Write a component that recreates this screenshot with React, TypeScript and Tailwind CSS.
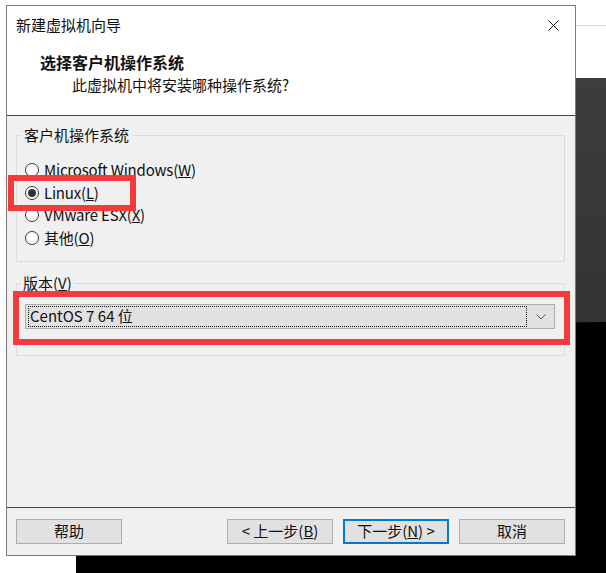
import React from 'react';

const font = 'font-["Noto_Sans_CJK_SC","Noto_Sans",sans-serif]';

const Radio: React.FC<{ checked?: boolean; children: React.ReactNode }> = ({ checked, children }) => (
  <div className="flex h-[22.5px] items-center">
    <span className="flex h-[14px] w-[14px] items-center justify-center rounded-full border border-[#333] bg-white">
      {checked && <span className="h-[8px] w-[8px] rounded-full bg-[#333]" />}
    </span>
    <span className="ml-[5px] text-[15px] leading-[20px] tracking-[-0.2px] text-[#111]">{children}</span>
  </div>
);

const Btn: React.FC<{ primary?: boolean; children: React.ReactNode }> = ({ primary, children }) => (
  <button
    className={
      primary
        ? 'flex h-[25px] w-[106px] items-center justify-center border-2 border-[#0078d7] bg-[#e1e1e1] text-[15px] text-[#111]'
        : 'flex h-[25px] w-[106px] items-center justify-center border border-[#adadad] bg-[#e1e1e1] text-[15px] text-[#111]'
    }
  >
    {children}
  </button>
);

export default function App() {
  return (
    <div className={`relative h-[573px] w-[606px] overflow-hidden bg-white ${font}`}>
      {/* background window behind the dialog */}
      <div className="absolute left-[575px] right-0 top-[25px] h-px bg-[#dcdcdc]" />
      <div className="absolute bottom-0 left-[76px] right-0 top-[78px] bg-gradient-to-b from-[#3d3d3d] to-[#2a2a2a]" />
      <div className="absolute bottom-0 left-[76px] right-0 top-[322px] bg-black [clip-path:polygon(0_6px,100%_0,100%_100%,0_100%)]" />

      {/* dialog */}
      <div className="absolute left-[6px] top-[5px] flex h-[551px] w-[570px] flex-col border border-[#7a7a7a] bg-[#f0f0f0]">
        <div className="h-[110px] border-b border-[#4a4a4a] bg-white">
          <div className="flex h-[38px] items-center justify-between pl-[9px] pr-[16px]">
            <span className="text-[15px] text-[#111]">新建虚拟机向导</span>
            <svg width="11" height="11" viewBox="0 0 11 11">
              <path d="M0.5 0.5L10.5 10.5M10.5 0.5L0.5 10.5" stroke="#111" strokeWidth="1" />
            </svg>
          </div>
          <div className="mt-[8px] pl-[33px] text-[16px] font-bold leading-[20px] text-[#111]">选择客户机操作系统</div>
          <div className="mt-[3px] pl-[65px] text-[15px] leading-[20px] text-[#111]">此虚拟机中将安装哪种操作系统?</div>
        </div>

        <div className="flex-1 pl-[9px] pr-[10px] pt-[9px]">
          <fieldset className="border border-[#dcdcdc] px-0 pb-[12px] pt-[14px]">
            <legend className="ml-[5px] px-[2px] text-[15px] leading-[20px] text-[#111]">客户机操作系统</legend>
            <div className="pl-[8px]">
              <Radio>Microsoft Windows(<u>W</u>)</Radio>
              <Radio checked>Linux(<u>L</u>)</Radio>
              <Radio>VMware ESX(<u>X</u>)</Radio>
              <Radio>其他(<u>O</u>)</Radio>
            </div>
          </fieldset>

          <fieldset className="mt-[11px] border border-[#dcdcdc] px-0 pb-[26px] pt-[11px]">
            <legend className="ml-[4px] px-[2px] text-[15px] leading-[20px] text-[#111]">
              版本(<u>V</u>)
            </legend>
            <div className="pl-[8px] pr-[9px]">
              <div className="flex h-[25px] items-center border border-[#adadad] bg-[#e1e1e1] pl-[2px] pr-[8px]">
                <div className="flex h-[21px] flex-1 items-center border border-dotted border-[#111] pl-[1px] text-[15px] text-[#111]">
                  CentOS 7 64 位
                </div>
                <svg className="ml-[9px]" width="10" height="6" viewBox="0 0 10 6">
                  <path d="M0.5 0.5L5 5L9.5 0.5" fill="none" stroke="#555" strokeWidth="1" />
                </svg>
              </div>
            </div>
          </fieldset>
        </div>

        <div className="flex h-[48px] items-start border-t border-[#4a4a4a] pl-[9px] pr-[10px] pt-[11px]">
          <Btn>帮助</Btn>
          <div className="ml-auto flex gap-[10px]">
            <Btn>&lt; 上一步(<u>B</u>)</Btn>
            <Btn primary>下一步(<u>N</u>) &gt;</Btn>
            <Btn>取消</Btn>
          </div>
        </div>
      </div>

      {/* red annotation boxes */}
      <div className="absolute left-[8px] top-[175px] h-[36px] w-[128px] border-[6px] border-[#f33b3b]" />
      <div className="absolute left-[13px] top-[291px] h-[54px] w-[557px] border-[6px] border-[#f33b3b]" />
    </div>
  );
}
